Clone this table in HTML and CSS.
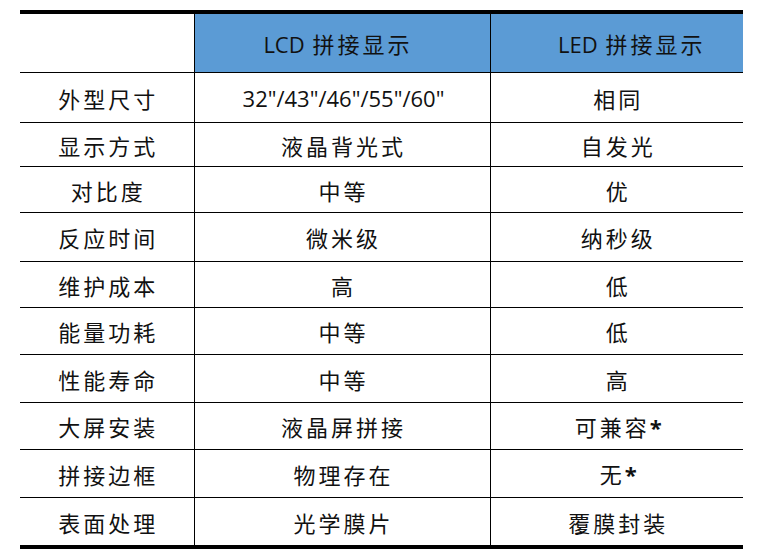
FILE: index.html
```html
<!DOCTYPE html>
<html lang="zh">
<head>
<meta charset="utf-8">
<link rel="stylesheet" href="styles.css">
</head>
<body>
<table class="cmp">
  <colgroup>
    <col class="c1"><col class="c2"><col class="c3">
  </colgroup>
  <thead>
    <tr>
      <th class="blank"></th>
      <th class="hd hd-lcd"><span class="lat">LCD</span> 拼接显示</th>
      <th class="hd hd-led"><span class="lat">LED</span> 拼接显示</th>
    </tr>
  </thead>
  <tbody>
    <tr class="r1"><td>外型尺寸</td><td><span class="lat">32"/43"/46"/55"/60"</span></td><td>相同</td></tr>
    <tr class="r2"><td>显示方式</td><td>液晶背光式</td><td>自发光</td></tr>
    <tr class="r3"><td>对比度</td><td>中等</td><td>优</td></tr>
    <tr class="r4"><td>反应时间</td><td>微米级</td><td>纳秒级</td></tr>
    <tr class="r5"><td>维护成本</td><td>高</td><td>低</td></tr>
    <tr class="r6"><td>能量功耗</td><td>中等</td><td>低</td></tr>
    <tr class="r7"><td>性能寿命</td><td>中等</td><td>高</td></tr>
    <tr class="r8"><td>大屏安装</td><td>液晶屏拼接</td><td>可兼容<span class="ast">*</span></td></tr>
    <tr class="r9"><td>拼接边框</td><td>物理存在</td><td>无<span class="ast">*</span></td></tr>
    <tr class="r10"><td>表面处理</td><td>光学膜片</td><td>覆膜封装</td></tr>
  </tbody>
</table>
</body>
</html>
```
FILE: styles.css
```css
html, body {
  margin: 0;
  padding: 0;
  background: #ffffff;
}
body {
  padding: 10px 0 0 20px;
  font-family: "Noto Sans CJK SC", "Noto Sans", sans-serif;
  color: #111111;
}
.cmp {
  border-collapse: collapse;
  width: 723px;
  table-layout: fixed;
  border-top: 4px solid #000;
  border-bottom: 4px solid #000;
}
.c1 { width: 174px; }
.c2 { width: 296px; }
.c3 { width: 253px; }
.cmp th, .cmp td {
  padding: 0 0 0 3px;
  text-align: center;
  vertical-align: middle;
  font-size: 22px;
  font-weight: 400;
  letter-spacing: 3px;
  line-height: 1;
  border-bottom: 1px solid #000;
  border-left: 1px solid #000;
  height: 46px;
}
.lat {
  font-family: "Open Sans", "Noto Sans", sans-serif;
  letter-spacing: 0;
}
.ast {
  font-family: "Open Sans", sans-serif;
  font-weight: 700;
  letter-spacing: 0;
}
.cmp th:first-child, .cmp td:first-child {
  border-left: none;
}
.cmp tbody tr:last-child td {
  border-bottom: none;
}
.cmp thead th {
  height: 58px;
}
.hd {
  background: #5b9bd5;
}
.cmp .hd-lcd { padding: 0 8px 0 0; }
.cmp .hd-led { padding: 0 0 0 30px; }
.r1 td { height: 49px; }
.r2 td { height: 43px; }
.r3 td { height: 45px; }
.r4 td { height: 48px; }
.r5 td { height: 45px; }
.r6 td { height: 46px; }
.r7 td { height: 47px; }
.r8 td { height: 46px; }
.r9 td { height: 47px; }
.r10 td { height: 47px; }
```
